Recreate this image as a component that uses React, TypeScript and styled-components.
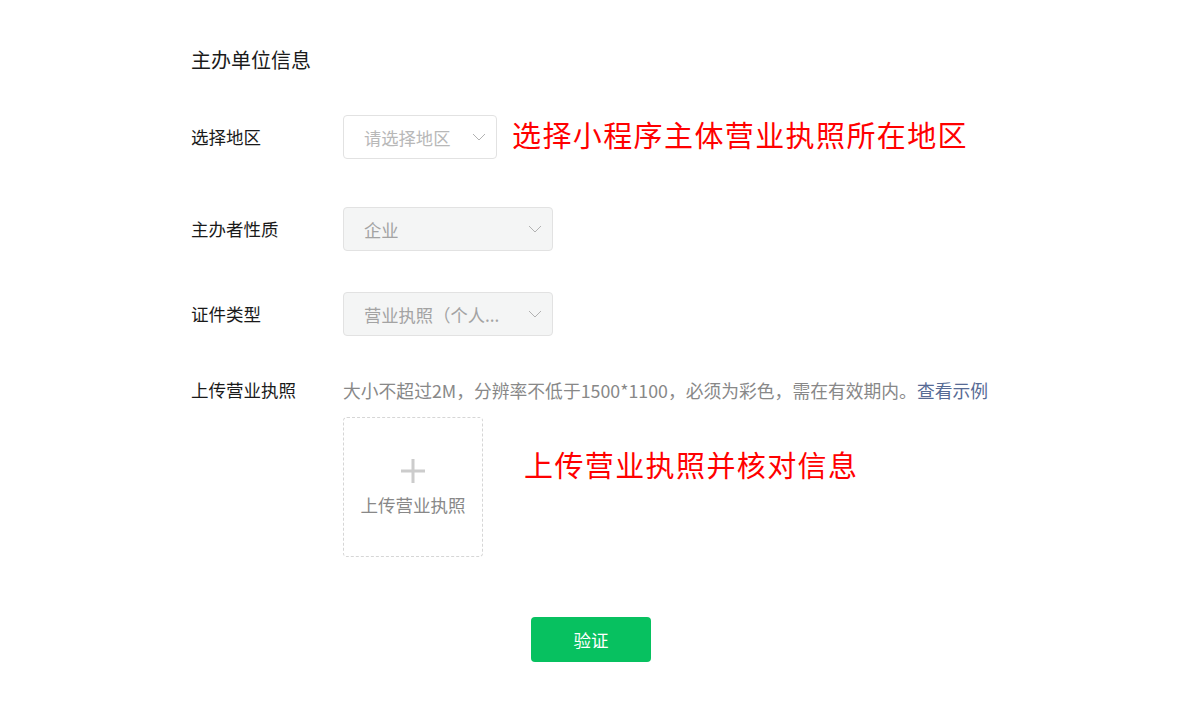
import React from 'react'
import styled, { createGlobalStyle } from 'styled-components'

const GlobalStyle = createGlobalStyle`
  html, body {
    margin: 0;
    padding: 0;
    background: #ffffff;
  }
  body {
    font-family: "Noto Sans CJK SC", "Noto Sans", sans-serif;
    color: #1a1a1a;
  }
`

const Page = styled.div`
  width: 800px;
  padding: 48px 0 40px 191px;
`

const Title = styled.h2`
  margin: 0;
  font-size: 20px;
  line-height: 24px;
  font-weight: 400;
  color: #1a1a1a;
`

const Row = styled.div<{ $top: number; $align?: string }>`
  display: flex;
  align-items: ${(p) => p.$align || 'center'};
  margin-top: ${(p) => p.$top}px;
`

const Label = styled.div`
  width: 152px;
  flex-shrink: 0;
  font-size: 17.5px;
  line-height: 24px;
  color: #1a1a1a;
`

const Select = styled.div<{ $width: number; $disabled?: boolean }>`
  box-sizing: border-box;
  width: ${(p) => p.$width}px;
  height: 44px;
  display: flex;
  align-items: center;
  justify-content: space-between;
  padding: 0 10px 0 20px;
  border: 1px solid #e2e2e2;
  border-radius: 4px;
  background: ${(p) => (p.$disabled ? '#f4f5f5' : '#ffffff')};
  font-size: 17.3px;
  color: ${(p) => (p.$disabled ? '#a3a3a3' : '#b8b8b8')};
  white-space: nowrap;
`

const Note = styled.div<{ $left: number; $top?: number; $lift?: number }>`
  margin-left: ${(p) => p.$left}px;
  margin-top: ${(p) => p.$top || 0}px;
  margin-bottom: ${(p) => p.$lift || 0}px;
  font-size: 29px;
  line-height: 30px;
  letter-spacing: 1.4px;
  color: #ff0000;
  white-space: nowrap;
`

const Field = styled.div`
  display: flex;
  flex-direction: column;
`

const Hint = styled.div`
  font-size: 17.8px;
  line-height: 24px;
  color: #888888;
  white-space: nowrap;
`

const HintLink = styled.a`
  color: #576b95;
  text-decoration: none;
`

const UploadLine = styled.div`
  display: flex;
  align-items: flex-start;
  margin-top: 15px;
`

const UploadBox = styled.div`
  box-sizing: border-box;
  width: 140px;
  height: 140px;
  border: 1px dashed #d6d6d6;
  border-radius: 4px;
  display: flex;
  flex-direction: column;
  align-items: center;
  padding-top: 40px;
`

const UploadText = styled.div`
  margin-top: 9px;
  font-size: 17.5px;
  line-height: 24px;
  color: #888888;
`

const Footer = styled.div`
  display: flex;
  justify-content: center;
  margin-top: 60px;
`

const Button = styled.button`
  width: 120px;
  height: 45px;
  border: none;
  border-radius: 4px;
  background: #07c160;
  color: #ffffff;
  font-family: inherit;
  font-size: 17.5px;
`

const Chevron = () => (
  <svg width="14" height="8" viewBox="0 0 14 8">
    <path d="M1 1l6 6 6-6" fill="none" stroke="#b2b2b2" strokeWidth="1" />
  </svg>
)

const Plus = () => (
  <svg width="26" height="26" viewBox="0 0 26 26">
    <path d="M13 1v24M1 13h24" stroke="#cccccc" strokeWidth="3" />
  </svg>
)

const App: React.FC = () => {
  return (
    <>
      <GlobalStyle />
      <Page>
        <Title>主办单位信息</Title>

        <Row $top={43}>
          <Label>选择地区</Label>
          <Select $width={154}>
            请选择地区
            <Chevron />
          </Select>
          <Note $left={15} $lift={7}>选择小程序主体营业执照所在地区</Note>
        </Row>

        <Row $top={48}>
          <Label>主办者性质</Label>
          <Select $width={210} $disabled>
            企业
            <Chevron />
          </Select>
        </Row>

        <Row $top={41}>
          <Label>证件类型</Label>
          <Select $width={210} $disabled>
            营业执照（个人...
            <Chevron />
          </Select>
        </Row>

        <Row $top={42} $align="flex-start">
          <Label>上传营业执照</Label>
          <Field>
            <Hint>
              大小不超过2M，分辨率不低于1500*1100，必须为彩色，需在有效期内。
              <HintLink href="#">查看示例</HintLink>
            </Hint>
            <UploadLine>
              <UploadBox>
                <Plus />
                <UploadText>上传营业执照</UploadText>
              </UploadBox>
              <Note $left={41} $top={32}>
                上传营业执照并核对信息
              </Note>
            </UploadLine>
          </Field>
        </Row>

        <Footer>
          <Button>验证</Button>
        </Footer>
      </Page>
    </>
  )
}

export default App
